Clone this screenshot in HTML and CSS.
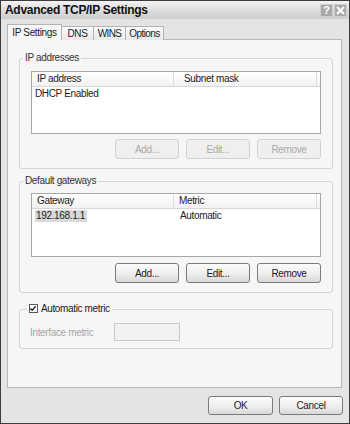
FILE: index.html
```html
<!DOCTYPE html>
<html lang="en">
<head>
    <meta charset="UTF-8">
    <title>Advanced TCP/IP Settings</title>
    <link rel="stylesheet" href="styles.css">
</head>
<body>
    <div class="window">
        <div class="titlebar">
            <span class="title">Advanced TCP/IP Settings</span>
            <div class="caption_btns">
                <span class="cap_btn">?</span>
                <span class="cap_btn">
                    <svg width="9" height="9" viewBox="0 0 9 9"><path d="M1 1L8 8M8 1L1 8" stroke="#fff" stroke-width="2"/></svg>
                </span>
            </div>
        </div>
        <div class="dialog">
            <div class="tabs">
                <span class="tab active">IP Settings</span>
                <span class="tab dns">DNS</span>
                <span class="tab wins">WINS</span>
                <span class="tab options">Options</span>
            </div>
            <div class="panel">
                <fieldset class="group first">
                    <legend>IP addresses</legend>
                    <div class="listbox">
                        <div class="list_head">
                            <span class="col_a">IP address</span>
                            <span class="col_b wide">Subnet mask</span>
                        </div>
                        <div class="list_row">
                            <span class="col_a">DHCP Enabled</span>
                        </div>
                    </div>
                    <div class="btn_row">
                        <button class="btn" disabled>Add...</button>
                        <button class="btn" disabled>Edit...</button>
                        <button class="btn" disabled>Remove</button>
                    </div>
                </fieldset>
                <fieldset class="group second">
                    <legend>Default gateways</legend>
                    <div class="listbox">
                        <div class="list_head">
                            <span class="col_a">Gateway</span>
                            <span class="col_b">Metric</span>
                        </div>
                        <div class="list_row">
                            <span class="col_a"><span class="selected">192.168.1.1</span></span>
                            <span class="col_b">Automatic</span>
                        </div>
                    </div>
                    <div class="btn_row">
                        <button class="btn">Add...</button>
                        <button class="btn">Edit...</button>
                        <button class="btn">Remove</button>
                    </div>
                </fieldset>
                <fieldset class="group third">
                    <legend>
                        <span class="checkbox">
                            <svg width="9" height="9" viewBox="0 0 9 9"><path d="M1.5 4.5L3.5 6.5L7.5 2" fill="none" stroke="#222" stroke-width="1.4"/></svg>
                        </span>
                        Automatic metric
                    </legend>
                    <div class="metric_row">
                        <span class="metric_label">Interface metric</span>
                        <span class="textbox"></span>
                    </div>
                </fieldset>
            </div>
            <div class="footer">
                <button class="btn ok">OK</button>
                <button class="btn">Cancel</button>
            </div>
        </div>
    </div>
</body>
</html>
```

FILE: styles.css
```css
body {
    margin: 0;
    font-family: "Liberation Sans", Arial, sans-serif;
    font-size: 10px;
    letter-spacing: -0.35px;
    color: #1c1c1c;
}
.window {
    width: 350px;
    height: 424px;
    box-sizing: border-box;
    border: 1px solid #3c3c3c;
    background: #e4e4e4;
}
.titlebar {
    height: 18px;
    display: flex;
    align-items: center;
    justify-content: space-between;
    padding: 0 2px 0 4px;
    background: linear-gradient(#f3f3f3, #d9d9d9 60%, #cfcfcf);
}
.title {
    font-size: 12px;
    font-weight: bold;
    letter-spacing: -0.3px;
    color: #111;
}
.caption_btns {
    display: flex;
    gap: 1px;
}
.cap_btn {
    width: 13px;
    height: 13px;
    box-sizing: border-box;
    display: flex;
    align-items: center;
    justify-content: center;
    background: #a9a9a9;
    border: 1px solid #cfcfcf;
    color: #fff;
    font-weight: bold;
    font-size: 11px;
}
.dialog {
    padding: 5px 7px 0 6px;
}
.tabs {
    display: flex;
    align-items: flex-end;
    height: 16px;
    margin-bottom: -1px;
}
.tab {
    height: 14px;
    line-height: 14px;
    box-sizing: border-box;
    text-align: center;
    border: 1px solid #b4b4b4;
    border-bottom: none;
    border-left: none;
    background: linear-gradient(#fafafa, #e9e9e9);
    color: #222;
}
.tab.active {
    width: 55px;
    height: 16px;
    line-height: 15px;
    border-left: 1px solid #b4b4b4;
    background: #f6f6f6;
}
.tab.dns {
    width: 32px;
}
.tab.wins {
    width: 32px;
    letter-spacing: -0.6px;
}
.tab.options {
    width: 38px;
    letter-spacing: -0.6px;
}
.panel {
    height: 349px;
    box-sizing: border-box;
    border: 1px solid #b9b9b9;
    background: #f6f6f6;
    padding: 12px 8px 0 11px;
}
.group {
    margin: 0;
    border: 1px solid #d4d4d4;
    border-radius: 3px;
    padding: 0 11px 9px 11px;
    min-width: 0;
}
.group legend {
    padding: 0 2px;
    margin-left: -8px;
    line-height: 12px;
    color: #333;
}
.group.second {
    margin-top: 6px;
}
.group.third {
    margin-top: 10px;
    padding-bottom: 7px;
}
.listbox {
    height: 63px;
    box-sizing: border-box;
    margin-top: 7px;
    border: 1px solid #a7a7a7;
    background: #fff;
}
.second .listbox {
    margin-top: 6px;
    height: 64px;
}
.list_head {
    display: flex;
    height: 14px;
    line-height: 14px;
    border-bottom: 1px solid #d6d6d6;
    background: linear-gradient(#fff, #f1f1f1);
}
.list_head .col_a {
    border-right: 1px solid #dcdcdc;
}
.list_head .col_b {
    flex: 1;
    margin-right: 3px;
    border-right: 1px solid #dcdcdc;
}
.col_a {
    width: 136px;
    padding-left: 5px;
}
.col_b {
    padding-left: 5px;
}
.col_b.wide {
    padding-left: 10px;
}
.list_row {
    display: flex;
    height: 12px;
    line-height: 12px;
    margin-top: 1px;
}
.list_row .col_a {
    padding-left: 3px;
    width: 138px;
}
.list_row .col_b {
    padding-left: 7px;
}
.selected {
    display: inline-block;
    background: #d9d9d9;
    padding: 0 2px 0 1px;
}
.btn_row {
    display: flex;
    justify-content: flex-end;
    gap: 7px;
    margin-top: 5px;
}
.second .btn_row {
    margin-top: 6px;
}
.btn {
    width: 64px;
    height: 20px;
    padding: 0;
    font-family: inherit;
    font-size: 10px;
    letter-spacing: -0.35px;
    color: #1c1c1c;
    border: 1px solid #7b7b7b;
    border-radius: 3px;
    background: linear-gradient(#fcfcfc, #ececec 60%, #d8d8d8);
}
.btn:disabled {
    color: #a9a9a9;
    border-color: #d2d2d2;
    background: #efefef;
}
.checkbox {
    display: inline-flex;
    width: 9px;
    height: 9px;
    box-sizing: border-box;
    border: 1px solid #5a5a5a;
    background: #fff;
    vertical-align: -1px;
    margin-right: 1px;
}
.checkbox svg {
    margin: -1px 0 0 -1px;
}
.third legend {
    margin-left: -4px;
    color: #1c1c1c;
}
.metric_row {
    display: flex;
    align-items: center;
    margin-top: 8px;
}
.metric_label {
    width: 84px;
    margin-left: -1px;
    color: #a6a6a6;
}
.textbox {
    width: 66px;
    height: 18px;
    box-sizing: border-box;
    border: 1px solid #c9c9c9;
    background: #f1f1f1;
}
.footer {
    display: flex;
    justify-content: flex-end;
    gap: 6px;
    margin-top: 8px;
    margin-right: -1px;
}
.footer .btn {
    height: 19px;
}
.footer .ok {
    width: 65px;
}
```
